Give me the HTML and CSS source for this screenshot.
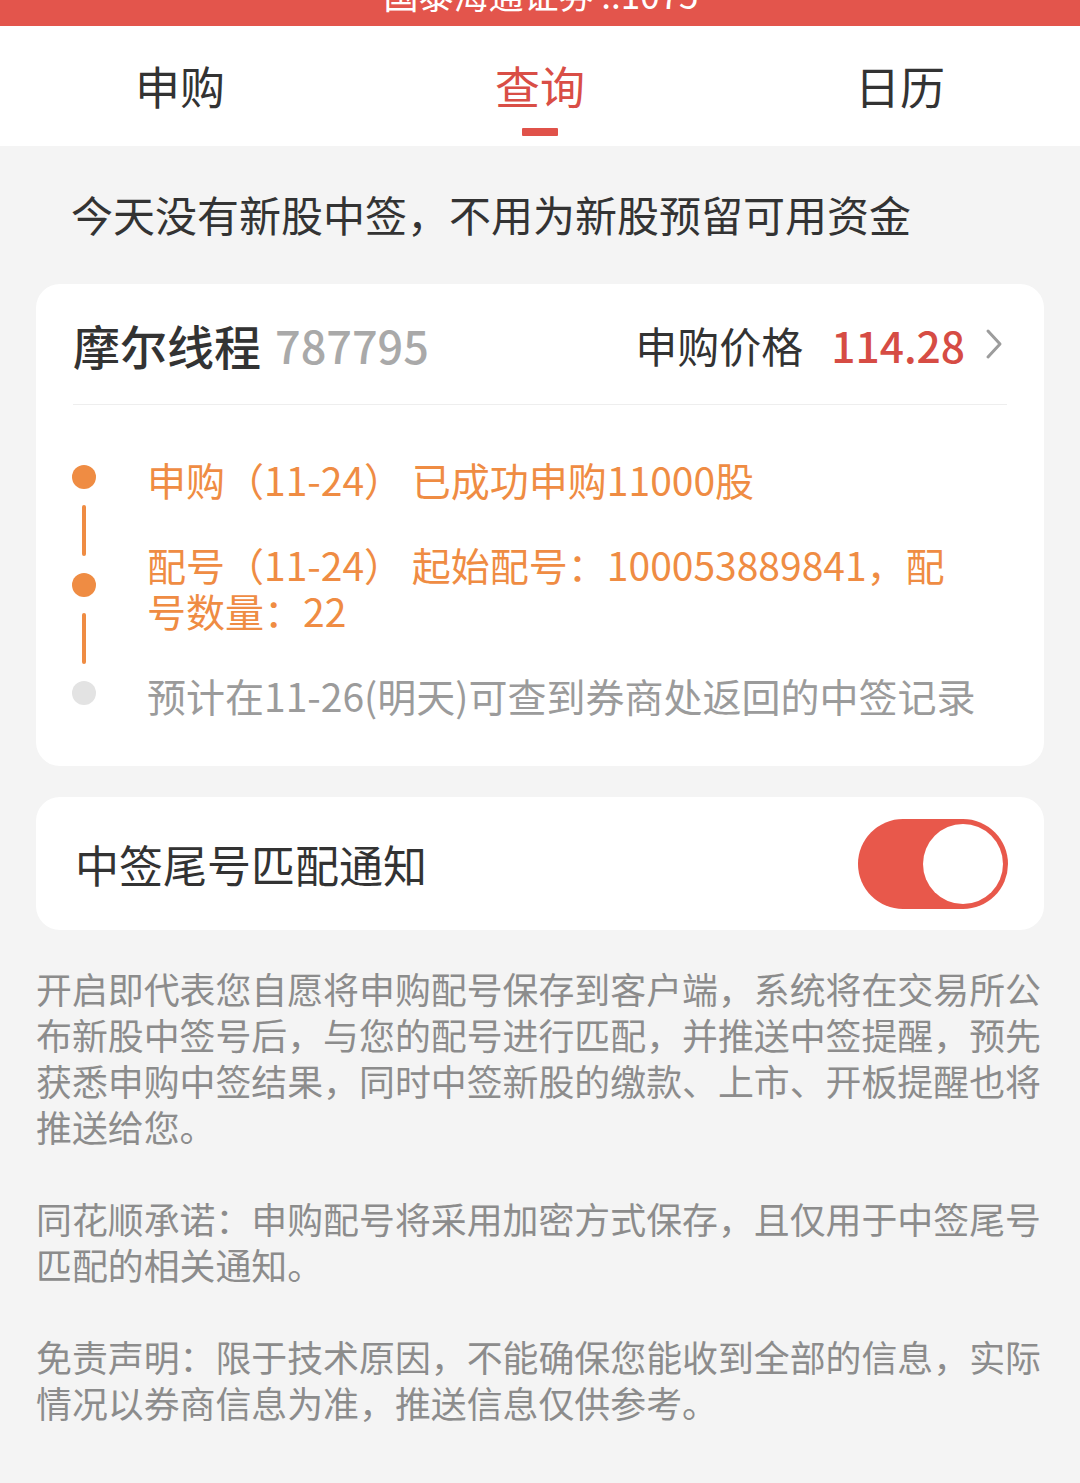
FILE: index.html
```html
<!DOCTYPE html>
<html lang="zh-CN">
<head>
<meta charset="utf-8" />
<title>新股查询</title>
<link rel="stylesheet" href="styles.css">
</head>
<body>
<div class="status">
    <span class="status-text">国泰海通证券 ..1075</span>
</div>
<div class="tabs">
    <div class="tab"><span>申购</span></div>
    <div class="tab active"><span>查询</span></div>
    <div class="tab"><span>日历</span></div>
</div>
<p class="notice">今天没有新股中签，不用为新股预留可用资金</p>
<div class="card">
    <div class="card-head">
        <div class="stock">
            <span class="stock-name">摩尔线程</span>
            <span class="stock-code">787795</span>
        </div>
        <div class="price">
            <span class="price-label">申购价格</span>
            <span class="price-num">114.28</span>
            <svg class="arrow" width="18" height="32" viewBox="0 0 18 32"><polyline points="3,3 15,16 3,29" fill="none" stroke="#9c9c9c" stroke-width="3" stroke-linecap="round" stroke-linejoin="round"/></svg>
        </div>
    </div>
    <div class="steps">
        <div class="step done"><span class="dot"></span><p>申购（11-24） 已成功申购11000股</p></div>
        <div class="step done"><span class="dot"></span><p>配号（11-24） 起始配号：100053889841，配号数量：22</p></div>
        <div class="step"><span class="dot"></span><p>预计在11-26(明天)可查到券商处返回的中签记录</p></div>
    </div>
</div>
<div class="card switch-card">
    <span class="switch-title">中签尾号匹配通知</span>
    <span class="switch on"><i></i></span>
</div>
<div class="tips">
    <p>开启即代表您自愿将申购配号保存到客户端，系统将在交易所公布新股中签号后，与您的配号进行匹配，并推送中签提醒，预先获悉申购中签结果，同时中签新股的缴款、上市、开板提醒也将推送给您。</p>
    <p>同花顺承诺：申购配号将采用加密方式保存，且仅用于中签尾号匹配的相关通知。</p>
    <p>免责声明：限于技术原因，不能确保您能收到全部的信息，实际情况以券商信息为准，推送信息仅供参考。</p>
</div>
</body>
</html>
```

FILE: styles.css
```css
*{ margin:0; padding:0; box-sizing:border-box;}
body{ background:#f4f4f4; font-family:"Noto Sans CJK SC", "Noto Sans", sans-serif; color:#333;}

.status{ height:26px; background:#e3554c; overflow:hidden; text-align:center;}
.status-text{ display:block; margin-top:-24px; font-size:35px; line-height:36px; color:#fff; padding-left:2px;}

.tabs{ display:flex; height:120px; background:#fff;}
.tab{ flex:1; display:flex; flex-direction:column; align-items:center; padding-top:35px;}
.tab span{ font-size:45px; line-height:50px; color:#333;}
.tab.active span{ color:#d94e46;}
.tab.active::after{ content:''; width:36px; height:8px; margin-top:17px; background:#e0524a; border-radius:1px;}

.notice{ padding:38px 36px 40px 71px; font-size:42px; line-height:60px; color:#333;}

.card{ margin:0 36px; background:#fff; border-radius:24px;}
.card-head{ display:flex; justify-content:space-between; align-items:center; height:121px; margin:0 37px; border-bottom:1px solid #eeeeee;}
.stock{ display:flex; align-items:center; gap:14px;}
.stock-name{ font-size:47px; font-weight:500; color:#333;}
.stock-code{ font-size:45px; font-weight:500; color:#a9a9a9;}
.price{ display:flex; align-items:center;}
.price-label{ font-size:42px; color:#333; margin-right:28px;}
.price-num{ font-size:42.5px; font-weight:500; color:#d64c44; margin-right:20px;}
.arrow{ display:block; margin-right:4px;}

.steps{ display:flex; flex-direction:column; gap:39px; padding:51px 66px 48px 36px;}
.step{ display:flex; align-items:center;}
.step p{ flex:1; margin-left:51px; font-size:39px; line-height:46px; color:#ef8c43;}
.dot{ position:relative; width:24px; height:24px; border-radius:50%; background:#ef8c43; margin-top:-5px;}
.step:not(.done) .dot{ background:#e3e3e3;}
.step:not(.done) p{ color:#9b9b9b;}
.step + .step .dot::before{ content:''; position:absolute; left:10px; top:-68px; width:4px; height:51px; border-radius:2px; background:#ef8c43;}

.switch-card{ display:flex; justify-content:space-between; align-items:center; height:133px; margin-top:31px; padding:0 36px 0 39px;}
.switch-title{ font-size:44px; color:#333;}
.switch{ display:flex; justify-content:flex-end; align-items:center; width:150px; height:90px; padding:5px; border-radius:45px; background:#e8584b;}
.switch i{ width:80px; height:80px; border-radius:50%; background:#fff;}

.tips{ padding:35px 36px 0;}
.tips p{ font-size:35.9px; line-height:46px; color:#8c8c8c; margin-bottom:46px;}
```
